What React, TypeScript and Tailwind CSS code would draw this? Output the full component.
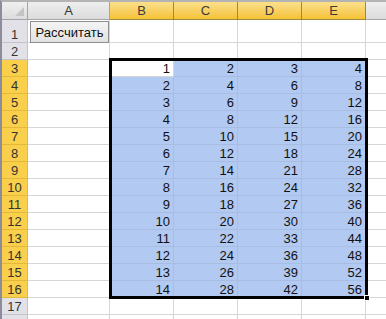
import React from 'react';

const COLS = ['A', 'B', 'C', 'D', 'E', ''];
const WIDTHS = [82, 64, 64, 64, 64, 40];
const ROWS = Array.from({ length: 18 }, (_, i) => i + 1);

const rowHeight = (r: number) => (r === 1 ? 23 : 17);

function cellValue(r: number, c: number) {
  if (r < 3 || r > 16 || c < 1 || c > 4) return '';
  return String((r - 2) * c);
}

export default function App() {
  return (
    <div className="w-[386px] h-[319px] overflow-hidden bg-white relative border-l-2 border-l-[#8d8c9c] border-t-2 border-t-[#b4b4b4]" style={{ fontFamily: '"Liberation Sans", Arial, sans-serif' }}>
      {/* column headers */}
      <div className="flex h-[18px]">
        <div className="w-[26px] shrink-0 bg-gradient-to-b from-[#f0f0f0] to-[#dcdcdc] border-r border-b border-[#9fa3ab] flex items-end justify-end p-[3px]">
          <div className="w-0 h-0 border-l-[9px] border-l-transparent border-b-[9px] border-b-[#c4c4c4]" />
        </div>
        {COLS.map((c, i) => {
          const sel = i >= 1 && i <= 4;
          return (
            <div key={i} style={{ width: WIDTHS[i] }}
              className={`shrink-0 flex items-center justify-center text-[13px] leading-none border-r border-b ${sel ? 'bg-gradient-to-b from-[#fbe08a] to-[#f5c230] border-[#9e8a3e] text-[#3b3b3b]' : 'bg-gradient-to-b from-[#eeeeee] to-[#dcdcdc] border-[#a6a6a6] text-[#333]'}`}>
              {c}
            </div>
          );
        })}
      </div>

      {ROWS.map(r => {
        const sel = r >= 3 && r <= 16;
        return (
          <div key={r} className="flex" style={{ height: rowHeight(r) }}>
            <div className={`w-[26px] shrink-0 flex items-end justify-center pb-[1px] text-[13px] leading-none border-r border-b ${sel ? 'bg-[#f9cf4c] border-[#e2b93a] text-[#333]' : 'bg-[#e1e1e7] border-[#c3c3cb] text-[#333]'}`}>
              {r < 18 ? r : ''}
            </div>
            {COLS.map((_, c) => {
              const inSel = sel && c >= 1 && c <= 4;
              const active = r === 3 && c === 1;
              if (r === 1 && c === 0) {
                return (
                  <div key={c} style={{ width: WIDTHS[c] }} className="shrink-0 border-r border-b border-[#d6d6d6] bg-white pl-[2px] pt-[1px]">
                    <button className="w-[79px] h-[22px] bg-gradient-to-b from-[#f4f4f4] to-[#e2e2e2] border border-[#8e8e8e] text-[13px] leading-none text-[#111] flex items-center justify-center">
                      Рассчитать
                    </button>
                  </div>
                );
              }
              return (
                <div key={c} style={{ width: WIDTHS[c] }}
                  className={`shrink-0 border-r border-b flex items-end justify-end pr-[3px] pb-[1px] text-[13px] leading-none text-[#111] ${inSel && !active ? 'bg-[#b2c9f1] border-[#a9bde2]' : 'bg-white border-[#d6d6d6]'}`}>
                  {cellValue(r, c)}
                </div>
              );
            })}
          </div>
        );
      })}

      {/* selection outline + fill handle */}
      <div className="absolute left-[107px] top-[56px] w-[259px] h-[241px] border-[3px] border-black pointer-events-none" />
      <div className="absolute left-[362px] top-[293px] w-[6px] h-[6px] bg-black border border-white" />
    </div>
  );
}
